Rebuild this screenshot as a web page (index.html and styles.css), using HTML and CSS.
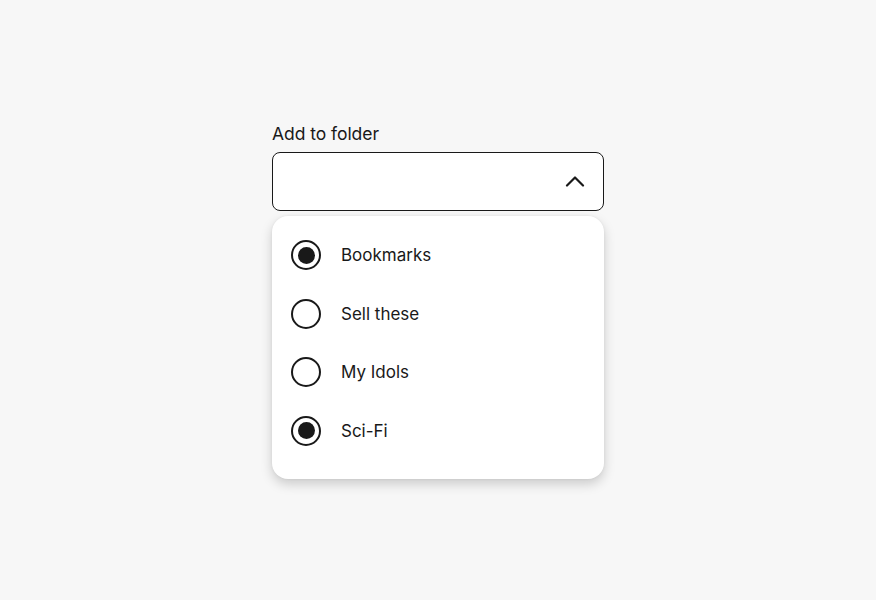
FILE: index.html
```html
<!DOCTYPE html>
<html lang="en">
<head>
<meta charset="utf-8">
<title>Add to folder</title>
<link rel="stylesheet" href="styles.css">
</head>
<body>
<main class="page">
  <div class="field">
    <label class="field-label" for="folder">Add to folder</label>
    <button class="select" id="folder" type="button" aria-expanded="true">
      <svg class="chevron" width="20" height="12" viewBox="0 0 20 12" aria-hidden="true">
        <path d="M2 10.5 L10 2.5 L18 10.5" fill="none" stroke="#191919" stroke-width="2.2" stroke-linecap="round" stroke-linejoin="round"/>
      </svg>
    </button>
    <ul class="menu" role="listbox">
      <li class="option"><span class="radio checked"></span><span class="option-text">Bookmarks</span></li>
      <li class="option"><span class="radio"></span><span class="option-text">Sell these</span></li>
      <li class="option"><span class="radio"></span><span class="option-text">My Idols</span></li>
      <li class="option"><span class="radio checked"></span><span class="option-text">Sci-Fi</span></li>
    </ul>
  </div>
</main>
</body>
</html>
```
FILE: styles.css
```css
* { box-sizing: border-box; }
html, body {
  margin: 0;
  padding: 0;
  background: #f7f7f7;
  font-family: Inter, "Noto Sans", "Liberation Sans", sans-serif;
  color: #191919;
}
.page {
  height: 600px;
  display: flex;
  justify-content: center;
  padding-top: 122px;
}
.field {
  width: 332px;
  display: flex;
  flex-direction: column;
}
.field-label {
  font-size: 17.5px;
  line-height: 24px;
  margin-bottom: 6px;
  letter-spacing: -0.05px;
}
.select {
  height: 59px;
  border: 1px solid #191919;
  border-radius: 8px;
  background: #fff;
  display: flex;
  align-items: center;
  justify-content: flex-end;
  padding: 0 18px 2px 16px;
  margin: 0;
}
.chevron { display: block; }
.menu {
  list-style: none;
  margin: 5px 0 0;
  padding: 10px 0 19px;
  background: #fff;
  border-radius: 16px;
  box-shadow: 0 5px 12px rgba(0, 0, 0, 0.18), 0 0 3px rgba(0, 0, 0, 0.06);
}
.option {
  height: 58.5px;
  display: flex;
  align-items: center;
  padding-left: 19px;
  gap: 20px;
}
.radio {
  width: 30px;
  height: 30px;
  border: 2px solid #191919;
  border-radius: 50%;
  display: flex;
  align-items: center;
  justify-content: center;
  flex: none;
}
.radio.checked::after {
  content: "";
  width: 17px;
  height: 17px;
  border-radius: 50%;
  background: #191919;
}
.option-text {
  font-size: 17px;
  line-height: 24px;
  letter-spacing: 0;
}
```
